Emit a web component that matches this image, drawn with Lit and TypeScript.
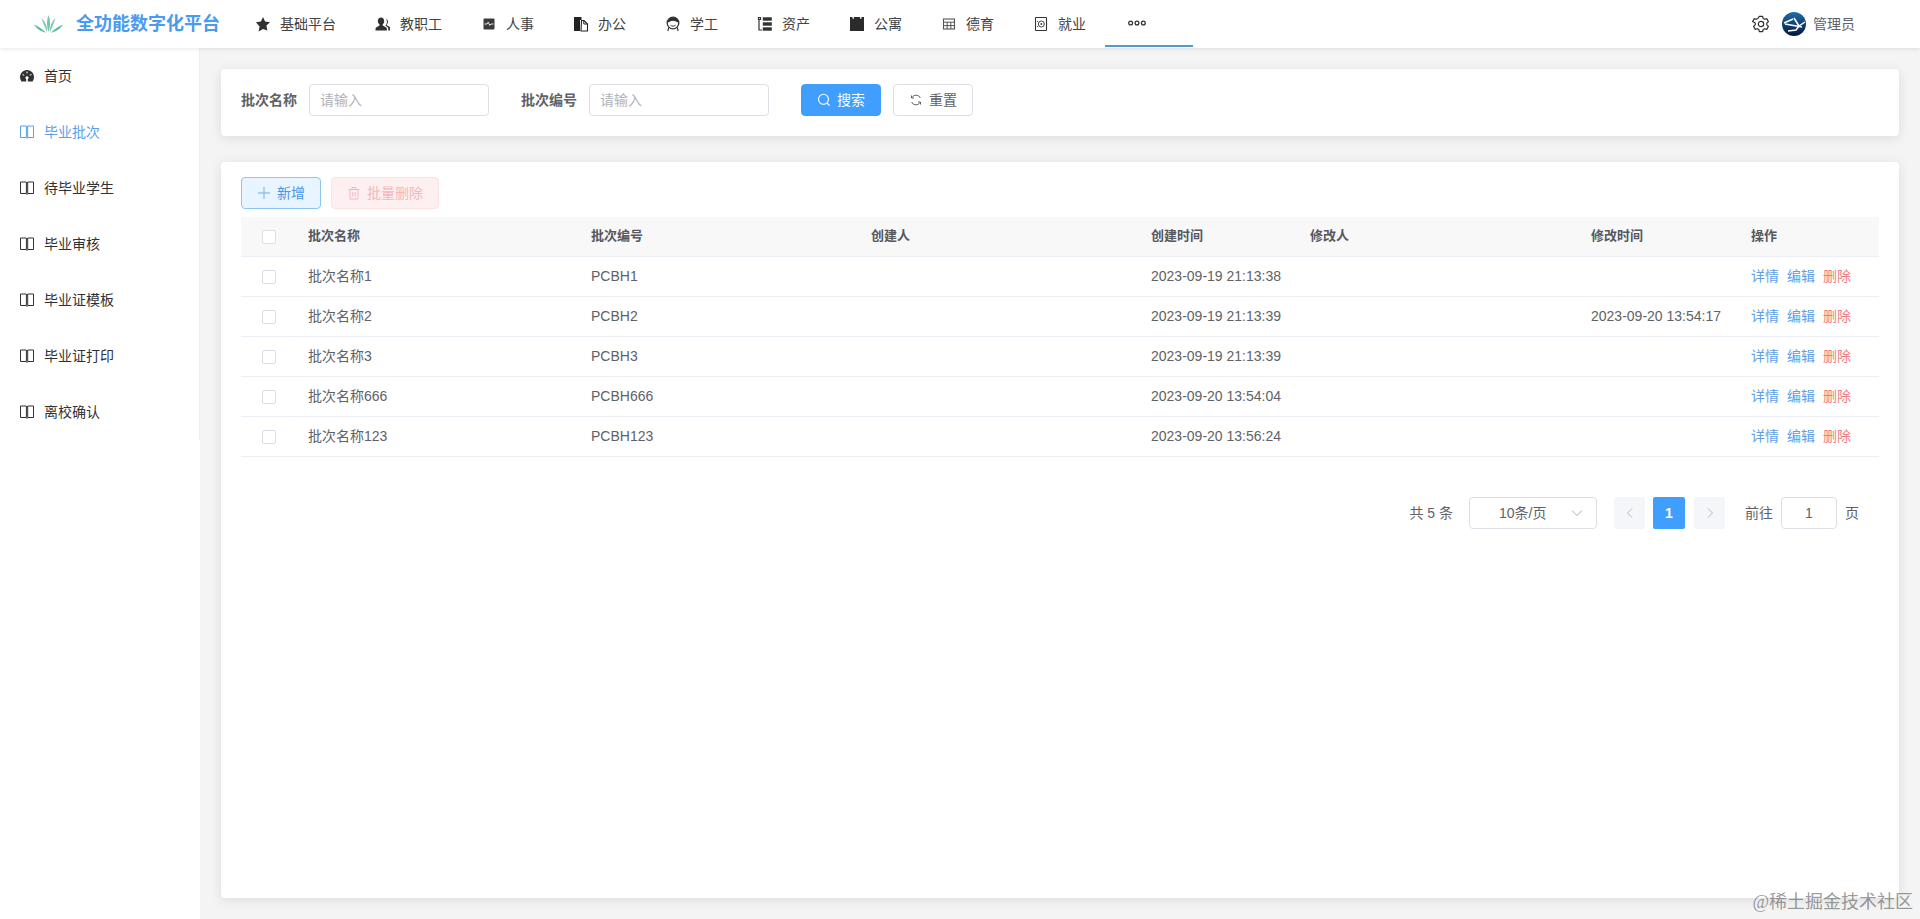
import { LitElement, css, html, svg } from "lit";
import { customElement } from "lit/decorators.js";

const icons: Record<string, unknown> = {
  star: svg`<path d="M8 1l2.100 4.600 5 .6-3.700 3.400 1 4.900L8 13.100l-4.400 2.400 1-4.900L.9 6.200l5-.6z" fill="#303133"/>`,
  users: svg`<path d="M6 1.500c2 0 3.200 1.600 3.200 3.600 0 1.500-.6 2.800-1.500 3.500v1l3.200 1.600c.7.400 1 1 1 1.800v1.500H.5V13c0-.8.300-1.400 1-1.800l3-1.600v-1C3.500 7.900 2.800 6.600 2.800 5.100 2.800 3.100 4 1.500 6 1.500z" fill="#303133"/><path d="M10.500 2.700c1.500.2 2.500 1.400 2.500 3 0 1.200-.5 2.200-1.200 2.800v.8l2.300 1.200c.6.300.9.800.9 1.500v2.500h-1.700V13c0-1-.5-1.900-1.400-2.400l-1.300-.7v-.5c.8-.9 1.300-2.200 1.300-3.500 0-1.200-.2-2.300-.9-3.200z" fill="#303133"/>`,
  chart: svg`<rect x="2.500" y="2.500" width="11" height="11" rx="1" fill="#3a3a3a"/><path d="M3.500 8h2.500l1.200-1.800 1.600 3.200 1.200-1.400h2.500" fill="none" stroke="#fff" stroke-width=".9"/>`,
  docs: svg`<path d="M1 1h7.500v3H7v11H1z" fill="#222"/><path d="M8.500 4.500h2.500l3.500 3.500v7H8z" fill="#fff" stroke="#222" stroke-width="1.100"/><path d="M10.800 4.500V8h3.700" fill="none" stroke="#222"/>`,
  student: svg`<circle cx="8" cy="7" r="5.800" fill="none" stroke="#303133" stroke-width="1.300"/><path d="M2.200 6.500C3 2.800 5.500 1.500 8 1.500s5 1.300 5.800 5c-1.800-.3-3.800-1.800-5.800-1.800S4 6.200 2.200 6.500z" fill="#303133"/><path d="M5.500 9.200c1.500 1.300 3.500 1.300 5 0" fill="none" stroke="#303133"/><path d="M3.800 11.500L2.800 15M12.200 11.500l1 3.500" stroke="#303133" stroke-width="1.100"/>`,
  assets: svg`<path d="M1.500 1.500h2v2h-2zM2 4v10h3" fill="none" stroke="#303133" stroke-width="1.200"/><rect x="5.800" y="1.300" width="9" height="3.400" fill="#303133"/><rect x="5.800" y="6.300" width="9" height="3.400" fill="#303133"/><rect x="5.800" y="11.300" width="9" height="3.400" fill="#303133"/>`,
  block: svg`<path d="M1 1h2.500v1.800h1.400V1h6.200v1.800h1.400V1H15v14H1z" fill="#2b2b2b"/>`,
  grid: svg`<rect x="2.500" y="3" width="11" height="10" fill="none" stroke="#555" stroke-width="1.100"/><path d="M2.500 6.200h11M6.200 6.200V13M9.800 6.200V13M2.500 9.600h11" fill="none" stroke="#555"/>`,
  safe: svg`<rect x="2.500" y="1.500" width="11" height="13" rx=".5" fill="none" stroke="#333" stroke-width="1.100"/><circle cx="8.300" cy="8" r="3" fill="none" stroke="#444"/><circle cx="8.300" cy="8" r="1" fill="#444"/><path d="M4 5.500h1M4 10.500h1" stroke="#444"/>`,
  dots: svg`<circle cx="2.500" cy="8" r="1.800" fill="none" stroke="#303133" stroke-width="1.200"/><circle cx="8.500" cy="8" r="1.800" fill="none" stroke="#303133" stroke-width="1.200"/><circle cx="14.500" cy="8" r="1.800" fill="none" stroke="#303133" stroke-width="1.200"/>`,
};

const navItems = [
  { icon: "star", label: "基础平台" },
  { icon: "users", label: "教职工" },
  { icon: "chart", label: "人事" },
  { icon: "docs", label: "办公" },
  { icon: "student", label: "学工" },
  { icon: "assets", label: "资产" },
  { icon: "block", label: "公寓" },
  { icon: "grid", label: "德育" },
  { icon: "safe", label: "就业" },
];

const menuItems = ["毕业批次", "待毕业学生", "毕业审核", "毕业证模板", "毕业证打印", "离校确认"];

const columns = ["批次名称", "批次编号", "创建人", "创建时间", "修改人", "修改时间", "操作"];

const rows = [
  { name: "批次名称1", code: "PCBH1", created: "2023-09-19 21:13:38", updated: "" },
  { name: "批次名称2", code: "PCBH2", created: "2023-09-19 21:13:39", updated: "2023-09-20 13:54:17" },
  { name: "批次名称3", code: "PCBH3", created: "2023-09-19 21:13:39", updated: "" },
  { name: "批次名称666", code: "PCBH666", created: "2023-09-20 13:54:04", updated: "" },
  { name: "批次名称123", code: "PCBH123", created: "2023-09-20 13:56:24", updated: "" },
];

const bookIcon = html`<svg class="menu-icon" viewBox="0 0 14 14">
  <path d="M.5 1h5.500L7 1.800 8 1h5.500v11.500H8L7 13.300l-1-.8H.5zM6.400 1.300v11M7.700 1.300v11" fill="none" stroke="currentColor" stroke-width="1"/>
</svg>`;

@customElement("app-root")
export class AppRoot extends LitElement {
  static styles = css`
    :host {
      display: flex;
      flex-direction: column;
      height: 100vh;
      overflow: hidden;
      position: relative;
      background: #f4f4f4;
      font-family: "Liberation Sans", "Noto Sans CJK SC", sans-serif;
      font-size: 14px;
      line-height: 20px;
      color: #606266;
    }

    svg {
      display: block;
      flex: none;
    }

    .header {
      flex: none;
      height: 48px;
      display: flex;
      align-items: center;
      background: #fff;
      box-shadow: 0 1px 4px rgba(0, 0, 0, 0.1);
      position: relative;
      z-index: 2;
    }

    .brand {
      width: 235px;
      flex: none;
      box-sizing: border-box;
      padding-left: 34px;
      display: flex;
      align-items: center;
      gap: 13px;
      font-size: 18px;
      font-weight: 700;
      color: #4a9af0;
    }

    .nav {
      display: flex;
      height: 100%;
    }

    .nav-item {
      display: flex;
      align-items: center;
      gap: 9px;
      padding: 0 19px 0 20px;
      color: #404246;
      height: 100%;
      box-sizing: border-box;
    }

    .nav-more {
      width: 88px;
      padding: 0 0 0 23px;
      border-bottom: 2px solid #5499c7;
      height: 47px;
    }

    .nav-more svg {
      width: 18px;
      height: 18px;
    }

    .user {
      margin-left: auto;
      padding-right: 65px;
      display: flex;
      align-items: center;
      color: #606266;
    }

    .gear {
      margin-right: 12px;
    }

    .avatar {
      margin-right: 7px;
    }

    .body {
      flex: 1;
      display: flex;
      min-height: 0;
    }

    .sidebar {
      width: 200px;
      flex: none;
      background: #fff;
    }

    .menu {
      border-right: 1px solid #eee;
    }

    .menu-item {
      height: 56px;
      display: flex;
      align-items: center;
      gap: 10px;
      padding-left: 20px;
      color: #303133;
    }

    .menu-item.active {
      color: #5a9fe8;
    }

    .menu-icon {
      width: 14px;
      height: 14px;
    }

    .main {
      flex: 1;
      min-width: 0;
      display: flex;
      flex-direction: column;
      gap: 26px;
      padding: 21px;
    }

    .card {
      background: #fff;
      border-radius: 4px;
      box-shadow: 0 2px 12px rgba(0, 0, 0, 0.1);
      padding: 15px 20px 20px;
    }

    .filters {
      display: flex;
      align-items: center;
    }

    .field {
      display: flex;
      align-items: center;
      gap: 12px;
      margin-right: 32px;
    }

    .field label {
      font-weight: 700;
      color: #606266;
    }

    .input {
      width: 180px;
      height: 32px;
      box-sizing: border-box;
      border: 1px solid #dcdfe6;
      border-radius: 4px;
      padding: 0 10px;
      display: flex;
      align-items: center;
      color: #b0b3b9;
    }

    .btn {
      width: 80px;
      height: 32px;
      box-sizing: border-box;
      border: 1px solid #dcdfe6;
      border-radius: 4px;
      display: flex;
      align-items: center;
      justify-content: center;
      gap: 6px;
      background: #fff;
      color: #606266;
    }

    .btn svg {
      width: 14px;
      height: 14px;
    }

    .btn.primary {
      background: #409eff;
      border-color: #409eff;
      color: #fff;
    }

    .btn.add {
      background: #e8f4ff;
      border-color: #8cc5f2;
      color: #4a96e8;
    }

    .btn.del {
      width: 108px;
      background: #fef0f0;
      border-color: #fde2e2;
      color: #f6b6bb;
    }

    .actions {
      display: flex;
      gap: 12px;
    }

    .toolbar {
      display: flex;
      gap: 10px;
      margin-bottom: 8px;
    }

    .table-card {
      flex: 1;
    }

    .row {
      display: grid;
      grid-template-columns: 55px 283px 280px 280px 159px 281px 160px 140px;
      height: 40px;
      box-sizing: border-box;
      align-items: center;
      border-bottom: 1px solid #ebeef5;
    }

    .row.head {
      background: #f8f8f9;
      font-size: 13px;
      font-weight: 700;
      color: #55585e;
    }

    .cell {
      padding: 0 12px 2px;
      white-space: nowrap;
    }

    .check {
      width: 14px;
      height: 14px;
      box-sizing: border-box;
      border: 1px solid #dcdfe6;
      border-radius: 2px;
      background: #fff;
      margin-left: 21px;
    }

    .ops {
      display: flex;
      gap: 8px;
    }

    .link {
      color: #5a9fe8;
    }

    .link.danger {
      color: #ec7c7c;
    }

    .pager {
      display: flex;
      align-items: center;
      justify-content: flex-end;
      margin: 40px 20px 0 0;
      height: 32px;
    }

    .select {
      width: 128px;
      height: 32px;
      box-sizing: border-box;
      border: 1px solid #dcdfe6;
      border-radius: 4px;
      margin: 0 16px;
      padding: 0 13px 0 29px;
      display: flex;
      align-items: center;
      justify-content: space-between;
    }

    .page {
      width: 31px;
      height: 32px;
      border-radius: 2px;
      background: #f4f6f9;
      display: flex;
      align-items: center;
      justify-content: center;
    }

    .page.prev {
      margin-left: 1px;
    }

    .page.current {
      width: 32px;
      margin: 0 9px 0 8px;
      background: #409eff;
      color: #fff;
      font-weight: 700;
    }

    .goto {
      margin-left: 20px;
      display: flex;
      align-items: center;
      gap: 8px;
    }

    .goto-input {
      width: 56px;
      height: 32px;
      box-sizing: border-box;
      border: 1px solid #dcdfe6;
      border-radius: 4px;
      display: flex;
      align-items: center;
      justify-content: center;
    }

    .watermark {
      position: absolute;
      right: 7px;
      bottom: 5px;
      font-size: 18px;
      line-height: 24px;
      color: rgba(90, 90, 90, 0.62);
      font-family: "Liberation Serif", "Noto Sans CJK SC", serif;
    }
  `;

  private renderHeader() {
    return html`
      <header class="header">
        <div class="brand">
          <svg width="29" height="18" viewBox="0 0 29 18">
            <path d="M14.500 17C12.500 12 12.500 5 14.500 0c2 5 2 12 0 17z" fill="#6fc6a8"/>
            <path d="M13 17C11 13 9 8 7.500 3c3.500 3 6 8.500 5.500 14z" fill="#7ccdb0"/>
            <path d="M16 17c2-4 4-9 5.500-14-3.500 3-6 8.500-5.500 14z" fill="#7ccdb0"/>
            <path d="M12 17.500C8 14 4 11 0 9.500c2.500 4 7 7.500 12 8z" fill="#55b99a"/>
            <path d="M17 17.500c4-3.500 8-6.500 12-8-2.500 4-7 7.500-12 8z" fill="#55b99a"/>
          </svg>
          全功能数字化平台
        </div>
        <nav class="nav">
          ${navItems.map(
            (item) => html`<div class="nav-item">
              <svg width="16" height="16" viewBox="0 0 16 16">${icons[item.icon]}</svg>
              ${item.label}
            </div>`
          )}
          <div class="nav-item nav-more">
            <svg viewBox="0 0 17 16">${icons.dots}</svg>
          </div>
        </nav>
        <div class="user">
          <svg class="gear" width="18" height="18" viewBox="0 0 18 18">
            <path d="M7.300 1.300h3.400l.5 2.200 1.400.8 2.100-.7 1.700 3-1.600 1.500v1.800l1.600 1.500-1.700 3-2.100-.7-1.400.8-.5 2.200H7.300l-.5-2.200-1.400-.8-2.100.7-1.700-3 1.600-1.500V8.100L.6 6.600l1.700-3 2.100.7 1.400-.8z" fill="none" stroke="#303133" stroke-width="1.200" stroke-linejoin="round"/>
            <circle cx="9" cy="9" r="2.700" fill="none" stroke="#303133" stroke-width="1.200"/>
          </svg>
          <svg class="avatar" width="24" height="24" viewBox="0 0 24 24">
            <defs>
              <linearGradient id="av" x1="0" y1="0" x2="0" y2="1">
                <stop offset="0" stop-color="#1f6fa8"/>
                <stop offset="1" stop-color="#04153f"/>
              </linearGradient>
            </defs>
            <circle cx="12" cy="12" r="12" fill="url(#av)"/>
            <path d="M2 11l9-4M3 12l17 3M12 6l5 8M23 10l-6 4-3 4-8 1" fill="none" stroke="#fff" stroke-width="1.500"/>
          </svg>
          管理员
        </div>
      </header>
    `;
  }

  private renderSidebar() {
    return html`
      <aside class="sidebar">
        <div class="menu">
          <div class="menu-item">
            <svg class="menu-icon" viewBox="0 0 14 14">
              <path fill-rule="evenodd" d="M7 1a7 7 0 0 1 6.200 10.200l-.7 1.300h-11l-.7-1.300A7 7 0 0 1 7 1zM6.500 2.500v2h1v-2zM2.300 5.800l1.700 1 .5-.9-1.700-1zM11.700 5.800l-1.700 1-.5-.9 1.700-1zM7 7.200a1.500 1.500 0 0 0-.8 2.800v2.500h1.600V10A1.500 1.500 0 0 0 7 7.200z" fill="#303133"/>
            </svg>
            首页
          </div>
          ${menuItems.map(
            (label, i) => html`<div class="menu-item ${i === 0 ? "active" : ""}">${bookIcon}${label}</div>`
          )}
        </div>
      </aside>
    `;
  }

  private renderFilters() {
    return html`
      <section class="card filters">
        <div class="field"><label>批次名称</label><div class="input">请输入</div></div>
        <div class="field"><label>批次编号</label><div class="input">请输入</div></div>
        <div class="actions">
          <div class="btn primary">
            <svg viewBox="0 0 14 14">
              <circle cx="6.500" cy="6.300" r="5" fill="none" stroke="#fff" stroke-width="1.100"/>
              <path d="M10 10l2.500 2.500" stroke="#fff" stroke-width="1.100"/>
            </svg>
            搜索
          </div>
          <div class="btn">
            <svg viewBox="0 0 14 14">
              <path d="M11.300 5A4.600 4.600 0 0 0 3 4.500M2.700 9a4.600 4.600 0 0 0 8.300.5" fill="none" stroke="#606266" stroke-width="1"/>
              <path d="M2.500 2.500V5H5M11.500 11.500V9H9" fill="none" stroke="#606266" stroke-width="1"/>
            </svg>
            重置
          </div>
        </div>
      </section>
    `;
  }

  private renderTable() {
    return html`
      <div class="row head">
        <div><div class="check"></div></div>
        ${columns.map((c) => html`<div class="cell">${c}</div>`)}
      </div>
      ${rows.map(
        (r) => html`<div class="row">
          <div><div class="check"></div></div>
          <div class="cell">${r.name}</div>
          <div class="cell">${r.code}</div>
          <div class="cell"></div>
          <div class="cell">${r.created}</div>
          <div class="cell"></div>
          <div class="cell">${r.updated}</div>
          <div class="cell ops">
            <span class="link">详情</span>
            <span class="link">编辑</span>
            <span class="link danger">删除</span>
          </div>
        </div>`
      )}
    `;
  }

  private renderPager() {
    return html`
      <div class="pager">
        <span>共 5 条</span>
        <div class="select">
          10条/页
          <svg width="12" height="12" viewBox="0 0 12 12">
            <path d="M1 3.500l5 5 5-5" fill="none" stroke="#a8abb2"/>
          </svg>
        </div>
        <div class="page prev">
          <svg width="12" height="12" viewBox="0 0 12 12"><path d="M8 1.500L3.500 6 8 10.500" fill="none" stroke="#b4b7bd"/></svg>
        </div>
        <div class="page current">1</div>
        <div class="page">
          <svg width="12" height="12" viewBox="0 0 12 12"><path d="M4 1.500L8.500 6 4 10.500" fill="none" stroke="#b4b7bd"/></svg>
        </div>
        <div class="goto">
          <span>前往</span>
          <div class="goto-input">1</div>
          <span>页</span>
        </div>
      </div>
    `;
  }

  protected render() {
    return html`
      ${this.renderHeader()}
      <div class="body">
        ${this.renderSidebar()}
        <main class="main">
          ${this.renderFilters()}
          <section class="card table-card">
            <div class="toolbar">
              <div class="btn add">
                <svg viewBox="0 0 14 14"><path d="M7 1v12M1 7h12" stroke="#8ec3f0" stroke-width="1.300"/></svg>
                新增
              </div>
              <div class="btn del">
                <svg viewBox="0 0 14 14">
                  <path d="M1.500 3.500h11M5 3.500V1.500h4v2M3 3.500v9.500h8V3.500M5.800 6v4.500M8.200 6v4.500" fill="none" stroke="#f6b6bb"/>
                </svg>
                批量删除
              </div>
            </div>
            ${this.renderTable()} ${this.renderPager()}
          </section>
        </main>
      </div>
      <div class="watermark">@稀土掘金技术社区</div>
    `;
  }
}
